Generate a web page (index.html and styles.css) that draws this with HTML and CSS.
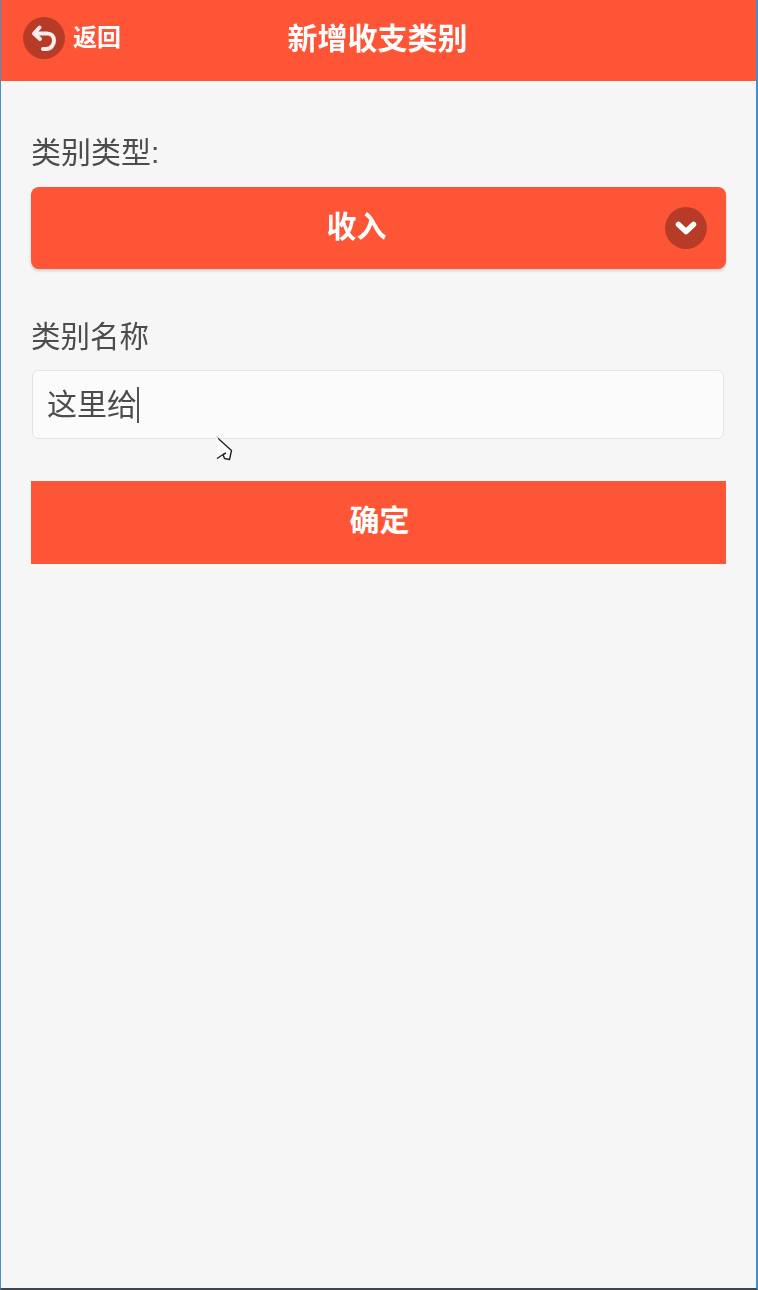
FILE: index.html
```html
<!DOCTYPE html>
<html lang="zh-CN">
<head>
<meta charset="utf-8">
<title>新增收支类别</title>
<link rel="stylesheet" href="styles.css">
</head>
<body>
<div class="frame">
  <header class="topbar">
    <a class="back">
      <span class="round-icon back-icon">
        <svg viewBox="0 0 42 42" width="42" height="42"><path d="M16.500 10.500 L11 16.500 L17 22 M12 16.500 H24 C28.500 16.500 31 19.500 31 23.500 C31 28 28 32 23 32 H20" fill="none" stroke="#fbeeea" stroke-width="4" stroke-linecap="round" stroke-linejoin="round"/></svg>
      </span>
      <span class="back-text">返回</span>
    </a>
    <h1 class="title">新增收支类别</h1>
  </header>
  <main class="content">
    <label class="field-label label-type">类别类型:</label>
    <div class="select">
      <span class="select-text">收入</span>
      <span class="round-icon select-icon">
        <svg viewBox="0 0 42 42" width="42" height="42"><path d="M13.500 17.500 L21 24.500 L28.500 17.500" fill="none" stroke="#fff" stroke-width="5.500" stroke-linecap="round" stroke-linejoin="round"/></svg>
      </span>
    </div>
    <label class="field-label label-name">类别名称</label>
    <div class="input"><span class="input-text">这里给</span><span class="caret"></span></div>
    <button class="submit">确定</button>
  </main>
  <svg class="pointer" viewBox="0 0 20 28" width="20" height="28"><path d="M1.500 1 L16.500 14.500 L14.500 23.500 L9.500 22.500 L8 18.500 L2 22.500 M8 18.500 L11 17" fill="#fff" stroke="#222" stroke-width="1.400" stroke-linejoin="round"/><path d="M1.500 1 L7 17" fill="none" stroke="#f6f6f7" stroke-width="2"/></svg>
</div>
</body>
</html>
```

FILE: styles.css
```css
* { box-sizing: border-box; }
html, body { margin: 0; padding: 0; }
body { width: 758px; height: 1290px; overflow: hidden; font-family: "Liberation Sans", "Noto Sans CJK SC", sans-serif; }
.frame { position: relative; width: 758px; height: 1290px; background: #f6f6f7; border-left: 1px solid #4a8fc0; border-right: 2px solid #3f90cc; border-bottom: 2px solid #3a4650; }
.topbar { position: relative; height: 81px; background: #fe5537; display: flex; align-items: center; justify-content: center; padding-bottom: 3px; }
.back { position: absolute; left: 22px; top: 17px; display: flex; align-items: center; gap: 8px; color: #fff; }
.round-icon { width: 42px; height: 42px; border-radius: 50%; background: #b73c28; display: block; flex: none; filter: blur(.4px); }
.round-icon svg { display: block; }
.back-text { font-size: 24px; font-weight: 700; line-height: 42px; filter: blur(.5px); }
.title { margin: 0; font-size: 30px; font-weight: 700; color: #fff; line-height: 40px; position: relative; left: -1px; filter: blur(.4px); }
.content { display: flex; flex-direction: column; padding: 0 30px 0 30px; }
.field-label { font-size: 30px; line-height: 40px; color: #4c4c4c; filter: blur(.5px); }
.label-type { margin-top: 52px; }
.label-name { margin-top: 48px; font-size: 29.500px; }
.select { position: relative; height: 82px; margin-top: 14px; background: #fe5537; border-radius: 8px; box-shadow: 0 2px 3px rgba(0,0,0,.16); display: flex; align-items: center; justify-content: center; color: #fff; padding: 0 44px 2px 0; }
.select-text { font-size: 30px; font-weight: 700; line-height: 40px; filter: blur(.4px); }
.select-icon { position: absolute; right: 19px; top: 20px; }
.input { height: 69px; margin: 13px 2px 0 1px; background: #fbfbfc; border: 1px solid #e4e4e6; border-radius: 6px; display: flex; align-items: center; padding-left: 14px; }
.input-text { font-size: 30px; line-height: 40px; color: #4c4c4c; filter: blur(.5px); }
.caret { width: 2px; height: 36px; background: #555; margin-left: 0; }
.submit { height: 83px; margin-top: 42px; border: 0; background: #fe5537; color: #fff; font: 700 30px/40px "Liberation Sans", "Noto Sans CJK SC", sans-serif; padding: 0 0 4px 2px; }
.pointer { position: absolute; left: 214px; top: 436px; }
```
